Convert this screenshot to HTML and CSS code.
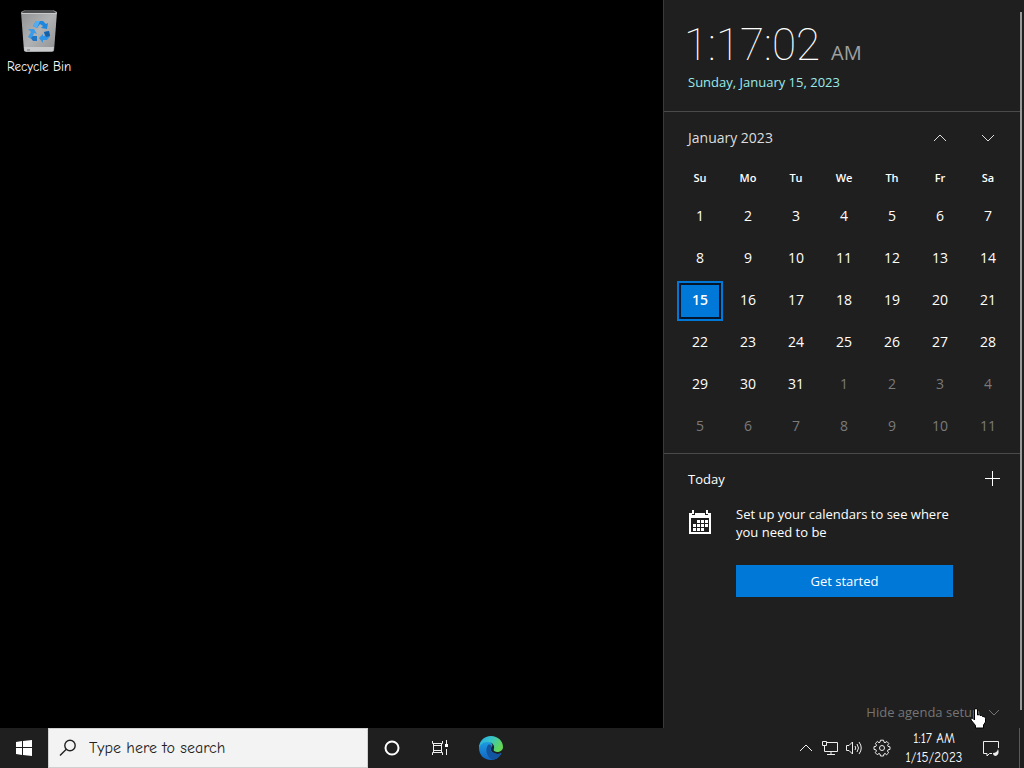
FILE: index.html
```html
<!DOCTYPE html>
<html lang="en">
	<head>
		<meta charset="UTF-8">
		<title>Desktop</title>
		<link rel="stylesheet" href="styles.css">
	</head>
	<body>
		<main class="desktop">
			<div class="icons">
				<a href="#" class="shortcut">
					<svg width="40" height="44" viewBox="0 0 40 44">
						<defs>
							<linearGradient id="bin" x1="0" y1="0" x2="1" y2="1">
								<stop offset="0" stop-color="#8f9091"/>
								<stop offset="0.5" stop-color="#b0b2b4"/>
								<stop offset="1" stop-color="#8d8f91"/>
							</linearGradient>
						</defs>
						<path d="M2 3L6 1H34L38 3L35 42L33 43H7L5 42Z" fill="url(#bin)"/>
						<path d="M3 4L6 1H34L37 4Z" fill="#4c4d4e"/>
						<path d="M2 4H38L37 5H3Z" fill="#c8c9ca"/>
						<path d="M5 38H35L34 42H6Z" fill="#c9cacb"/>
						<path d="M8 41H11" stroke="#777"/>
						<path d="M14 17L17 12H24L27 15L29 14L28 20L22 19L24 17L21 15L18 19Z" fill="#1e86dc"/>
						<path d="M14 17L17 12H21L18 19Z" fill="#54adf0"/>
						<path d="M9 20L15 20L18 25L15 24L14 27L18 31H14L9 28L12 23Z" fill="#3d9ce8"/>
						<path d="M12 29L14 27H18V32H14Z" fill="#1f74c4"/>
						<path d="M20 29L24 25V27H26L25 23L30 22L31 27L28 31H24V34Z" fill="#2f93e6"/>
						<path d="M25 23L30 22L31 27L27 28Z" fill="#155fa9"/>
					</svg>
					<span>Recycle Bin</span>
				</a>
			</div>
			<section class="flyout">
				<div class="panel">
					<header class="now">
						<div class="time"><span class="digits">1:17:02</span><span class="ampm">AM</span></div>
						<a href="#" class="today-link">Sunday, January 15, 2023</a>
					</header>
					<div class="calendar">
						<div class="month">
							<button class="month-name">January 2023</button>
							<button class="arrow" aria-label="Previous month"><svg width="14" height="8" viewBox="0 0 14 8"><path d="M1 7L7 1L13 7"/></svg></button>
							<button class="arrow" aria-label="Next month"><svg width="14" height="8" viewBox="0 0 14 8"><path d="M1 1L7 7L13 1"/></svg></button>
						</div>
						<table class="days">
							<thead>
								<tr><th>Su</th><th>Mo</th><th>Tu</th><th>We</th><th>Th</th><th>Fr</th><th>Sa</th></tr>
							</thead>
							<tbody>
								<tr>
									<td><button>1</button></td>
									<td><button>2</button></td>
									<td><button>3</button></td>
									<td><button>4</button></td>
									<td><button>5</button></td>
									<td><button>6</button></td>
									<td><button>7</button></td>
								</tr>
								<tr>
									<td><button>8</button></td>
									<td><button>9</button></td>
									<td><button>10</button></td>
									<td><button>11</button></td>
									<td><button>12</button></td>
									<td><button>13</button></td>
									<td><button>14</button></td>
								</tr>
								<tr>
									<td><button class="selected">15</button></td>
									<td><button>16</button></td>
									<td><button>17</button></td>
									<td><button>18</button></td>
									<td><button>19</button></td>
									<td><button>20</button></td>
									<td><button>21</button></td>
								</tr>
								<tr>
									<td><button>22</button></td>
									<td><button>23</button></td>
									<td><button>24</button></td>
									<td><button>25</button></td>
									<td><button>26</button></td>
									<td><button>27</button></td>
									<td><button>28</button></td>
								</tr>
								<tr>
									<td><button>29</button></td>
									<td><button>30</button></td>
									<td><button>31</button></td>
									<td><button class="other">1</button></td>
									<td><button class="other">2</button></td>
									<td><button class="other">3</button></td>
									<td><button class="other">4</button></td>
								</tr>
								<tr>
									<td><button class="other">5</button></td>
									<td><button class="other">6</button></td>
									<td><button class="other">7</button></td>
									<td><button class="other">8</button></td>
									<td><button class="other">9</button></td>
									<td><button class="other">10</button></td>
									<td><button class="other">11</button></td>
								</tr>
							</tbody>
						</table>
					</div>
					<div class="agenda">
						<div class="agenda-head">
							<span>Today</span>
							<button aria-label="New event"><svg width="16" height="16" viewBox="0 0 16 16"><path d="M8.500 0V15M1 7.500H16"/></svg></button>
						</div>
						<div class="setup">
							<svg class="cal-icon" width="24" height="26" viewBox="0 0 24 26">
								<path fill="#fff" fill-rule="evenodd" d="M1 4H4V6H7V4H17V6H20V4H23V25H1ZM3 9V23H21V9Z"/>
								<path fill="#fff" d="M4 1H6V5H4ZM18 1H20V5H18Z"/>
								<path stroke="#fff" stroke-width="3" stroke-dasharray="3 1" d="M9 12.500H20M5 16.500H20M5 20.500H16"/>
							</svg>
							<div class="setup-text">
								<p>Set up your calendars to see where you need to be</p>
								<button class="start-btn">Get started</button>
							</div>
						</div>
						<button class="hide">Hide agenda setup<svg width="12" height="7" viewBox="0 0 12 7"><path d="M1 1L6 6L11 1"/></svg></button>
					</div>
				</div>
				<div class="scroll"></div>
			</section>
		</main>
		<footer class="taskbar">
			<button class="task" aria-label="Start">
				<svg width="16" height="16" viewBox="0 0 16 16"><path fill="#fff" d="M0 2L6 1V7H0ZM7 1L16 0V7H7ZM0 8H6V15L0 14ZM7 8H16V16L7 15Z"/></svg>
			</button>
			<label class="search">
				<svg width="18" height="18" viewBox="0 0 18 18"><circle cx="11" cy="6.5" r="5.2"/><path d="M7.3 10.3L1 16.6"/></svg>
				<input type="text" placeholder="Type here to search" aria-label="Search">
			</label>
			<button class="task" aria-label="Cortana">
				<svg width="16" height="16" viewBox="0 0 16 16"><circle cx="8" cy="8" r="6.5" fill="none" stroke="#fff" stroke-width="2"/></svg>
			</button>
			<button class="task" aria-label="Task view">
				<svg width="17" height="16" viewBox="0 0 17 16"><path fill="none" stroke="#eee" d="M.5 1V3.5H10.5V1M.5 15V12.5H10.5V15M1.5 5.5H9.5V10.5H1.5ZM1.5 3V13M9.5 3V13M14.5 0V4M14.5 9V15"/><path fill="#fff" d="M13 4H16V7H13Z"/></svg>
			</button>
			<button class="task edge" aria-label="Microsoft Edge">
				<svg width="24" height="24" viewBox="0 0 24 24">
					<defs>
						<linearGradient id="wave" x1="0" y1="0" x2="1" y2="0.4">
							<stop offset="0" stop-color="#2aa9e8"/>
							<stop offset="0.5" stop-color="#36c4c8"/>
							<stop offset="1" stop-color="#64d656"/>
						</linearGradient>
						<linearGradient id="body" x1="0" y1="0" x2="0" y2="1">
							<stop offset="0" stop-color="#1b9de2"/>
							<stop offset="1" stop-color="#1464c0"/>
						</linearGradient>
					</defs>
					<path fill="url(#body)" d="M0 12C0 7 5 5 9 5.500C13 6 14 9 13 11C11 13 12 16 16 17.500C18 18.300 20.500 18 22.500 17C20 22 16 24 12 24C5 24 0 19 0 12Z"/>
					<path fill="#1254a0" d="M9 9C6 13 7 20 13 23.800C17 24 20.500 21 22.500 17C20 18.300 17 18.200 15 17C11 15.500 11 12.500 13 11C12.500 9 10.500 8 9 9Z"/>
					<path fill="url(#wave)" d="M0 12C0 5 5 0 12 0C19 0 24 5 24 11C24 14.500 21 16 18 16C15.500 16 14 15 14.500 13.500C16.500 10.500 14 6 8.500 6C4 6 1 9 0 12Z"/>
					<path fill="#10253a" d="M13 11C11.500 12.500 12 15 15 16.500C16 17 18 16.500 18 16C15.500 16 14 15 14.500 13.500Q15 12 13 11Z"/>
				</svg>
			</button>
			<div class="tray">
				<button aria-label="Show hidden icons"><svg width="14" height="8" viewBox="0 0 14 8"><path d="M1 7L7 1L13 7"/></svg></button>
				<button aria-label="Network"><svg width="18" height="16" viewBox="0 0 18 16"><path d="M5 2.500H16.500V11.500H3.500V6M10 12V15M6 14.500H14M1.500 1.500H5.500V5.500H1.500ZM3.500 6V8"/></svg></button>
				<button aria-label="Volume"><svg width="18" height="16" viewBox="0 0 18 16"><path d="M1.500 5.500H4L7.500 2V14L4 10.500H1.500ZM10 6Q11.500 8 10 10M12 4Q15 8 12 12M14 2Q18.500 8 14 14"/></svg></button>
				<button class="gear" aria-label="Settings"><svg width="18" height="18" viewBox="0 0 18 18"><circle cx="9" cy="9" r="2.500"/><path stroke-linejoin="round" d="M7.500 1.200H10.500L11 3.200L12 3.700L13.900 2.500L15.800 4.500L14.600 6.200L15 7.400L17 7.800V10.400L15 10.800L14.500 12L15.600 13.800L13.700 15.700L12 14.500L11 15L10.500 17H7.500L7 15L6 14.500L4.200 15.700L2.300 13.700L3.400 12L3 10.800L1 10.400V7.700L3 7.300L3.500 6.100L2.400 4.400L4.300 2.500L6 3.700L7 3.200Z"/></svg></button>
				<button class="clock"><span>1:17 AM</span><span>1/15/2023</span></button>
				<button class="notify" aria-label="Notifications"><svg width="18" height="17" viewBox="0 0 18 17"><path d="M10 13.500H7.500L5 16V13.500H1.500V1.500H16.500V8"/><path class="moon" d="M16 9Q15 13 11 13Q11 16 14 16Q18 14 16 9Z"/></svg></button>
				<div class="peek"></div>
			</div>
		</footer>
		<!-- hand pointer -->
		<svg class="pointer" width="16" height="21" viewBox="0 0 16 21"><path fill="#fff" stroke="#000" d="M4.500 12V2Q4.500 .500 6 .500T7.500 2V7Q9.500 6 10 7.500Q12 6.800 12.500 8.500Q15.500 8 15.500 10.500V14L13.500 17V20H5.500V17.500L1 12Q.500 10 2 10Q3 10 4.500 12Z"/></svg>
	</body>
</html>
```
FILE: styles.css
```css
*{
	box-sizing: border-box;
}
body{
	margin: 0;
	height: 100vh;
	display: flex;
	flex-direction: column;
	background: #000;
	color: #fff;
	font: 14px/18px "Segoe UI", "Open Sans", sans-serif;
	overflow: hidden;
}
button{
	margin: 0;
	padding: 0;
	border: 0;
	background: none;
	color: inherit;
	font: inherit;
}
a{
	color: inherit;
	text-decoration: none;
}
svg{
	display: block;
}
.desktop{
	flex: 1;
	min-height: 0;
	display: flex;
	justify-content: space-between;
}
.icons{
	padding: 9px 1px;
}
.shortcut{
	display: flex;
	flex-direction: column;
	align-items: center;
	gap: 5px;
	width: 76px;
	font: 13px/18px "Comic Neue", "Open Sans", sans-serif;
}

/* calendar flyout */
.flyout{
	display: flex;
	width: 361px;
	background: #1f1f1f;
	border-left: 1px solid #3a3a3a;
}
.panel{
	flex: 1;
	display: flex;
	flex-direction: column;
}
.scroll{
	width: 2px;
	margin: 12px 2px 18px 0;
	background: #9a9a9a;
}
.now{
	padding: 21px 20px;
	height: 112px;
	border-bottom: 1px solid #4a4a4a;
}
.time{
	display: flex;
	align-items: baseline;
	gap: 11px;
	line-height: 48px;
}
.digits{
	font-family: Roboto, sans-serif;
	font-size: 44px;
	font-weight: 100;
}
.ampm{
	font-size: 20px;
	line-height: 20px;
	color: #a0a0a0;
}
.today-link{
	display: block;
	margin-top: 4px;
	padding-left: 4px;
	font-size: 13px;
	color: #99ebeb;
}
.calendar{
	padding: 2px 8px 5px 12px;
	border-bottom: 1px solid #4a4a4a;
}
.month{
	display: flex;
	height: 48px;
}
.month-name{
	flex: 1;
	padding-left: 12px;
	text-align: left;
	color: #ddd;
}
.arrow{
	width: 48px;
	display: flex;
	align-items: center;
	justify-content: center;
}
.arrow path, .hide path, .agenda-head path{
	fill: none;
	stroke: #ddd;
}
.days{
	width: 100%;
	table-layout: fixed;
	border-collapse: collapse;
	text-align: center;
}
.days th{
	height: 34px;
	padding: 0 0 2px;
	font-size: 11px;
	font-weight: 600;
}
.days td{
	height: 42px;
	padding: 0;
}
.days td button{
	display: block;
	width: 46px;
	height: 40px;
	margin: 0 auto;
	padding-bottom: 2px;
}
.days .selected{
	border: 2px solid #0078d7;
	background: #0078d7;
	box-shadow: inset 0 0 0 2px #05152a;
	font-weight: 600;
}
.days .other{
	color: #7a7a7a;
}
.agenda{
	flex: 1;
	display: flex;
	flex-direction: column;
	padding: 16px 20px 7px 24px;
	font-size: 13px;
}
.agenda-head{
	display: flex;
	align-items: center;
	justify-content: space-between;
}
.agenda-head path{
	stroke: #fff;
}
.setup{
	display: flex;
	gap: 24px;
	margin-top: 17px;
}
.cal-icon{
	margin-top: 4px;
}
.setup-text{
	width: 217px;
}
.setup p{
	margin: 0 0 24px;
}
.start-btn{
	width: 100%;
	height: 32px;
	background: #0078d7;
}
.hide{
	display: flex;
	align-items: center;
	gap: 8px;
	margin-top: auto;
	align-self: flex-end;
	color: #757575;
}
.hide path{
	stroke: #757575;
}

/* taskbar */
.taskbar{
	display: flex;
	height: 40px;
	background: #1f1f1f;
}
.task{
	width: 48px;
	display: flex;
	align-items: center;
	justify-content: center;
}
.edge{
	width: 54px;
}
.search{
	width: 320px;
	display: flex;
	align-items: center;
	gap: 12px;
	padding: 0 10px;
	background: #f3f3f3;
	border: 1px solid #d0d0d0;
}
.search svg{
	fill: none;
	stroke: #222;
	stroke-width: 1.4;
}
.search input{
	flex: 1;
	border: 0;
	padding: 0;
	background: none;
	font: 16px/20px "Comic Neue", "Open Sans", sans-serif;
	outline: none;
}
.search input::placeholder{
	color: #222;
}
.tray{
	display: flex;
	margin-left: auto;
}
.tray button{
	width: 24px;
	display: flex;
	align-items: center;
	justify-content: center;
}
.tray svg{
	fill: none;
	stroke: #eee;
}
.tray .moon{
	fill: #eee;
	stroke: none;
}
.tray .gear{
	width: 32px;
}
.tray .clock{
	width: 72px;
	flex-direction: column;
	font: 13px/19px "Comic Neue", "Open Sans", sans-serif;
}
.tray .notify{
	width: 42px;
}
.peek{
	width: 5px;
	margin-left: 7px;
	border-left: 1px solid #5a5a5a;
}
.pointer{
	position: absolute;
	right: 38px;
	bottom: 39px;
}
```
